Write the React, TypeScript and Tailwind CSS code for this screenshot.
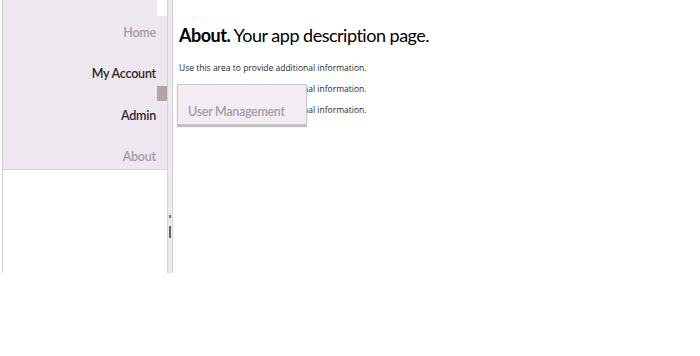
import React from 'react';

const navItems = [
    { label: 'Home', active: false },
    { label: 'My Account', active: true },
    { label: 'Admin', active: true },
    { label: 'About', active: false },
];

const App: React.FC = () => {
    return (
        <div className="w-[700px] h-[356px] bg-white overflow-hidden" style={{ fontFamily: 'Lato, "Open Sans", sans-serif' }}>
            <div className="flex h-[273px] pl-[2px]">
                {/* Side panel */}
                <div className="flex border-l border-[#d2cdd2]">
                    <div className="flex flex-col w-[164px]">
                        <div className="flex h-[170px] shrink-0 bg-[#efe7ef] border-b border-[#d9d1d9]">
                            <nav className="flex-1 flex flex-col items-end pt-[13px] pr-[1px]">
                                {navItems.map((item) => (
                                    <div
                                        key={item.label}
                                        className={`h-[41.3px] shrink-0 leading-[40px] text-[12.5px] tracking-[-0.2px] font-semibold ${item.active ? 'text-[#2b2629]' : 'text-[#a39ca1]'}`}
                                    >
                                        {item.label}
                                    </div>
                                ))}
                            </nav>
                            <div className="w-[10px] flex flex-col">
                                <div className="h-[16px] bg-white"></div>
                                <div className="h-[70px]"></div>
                                <div className="h-[15px] bg-[#b3a4a8]"></div>
                            </div>
                        </div>
                        <div className="flex-1 bg-white"></div>
                    </div>
                    {/* Splitter strip */}
                    <div className="w-[6px] bg-[#efe7ef] border-x border-[#d9d1d9] flex flex-col items-center pt-[215px]">
                        <div className="w-[2px] h-[3px] bg-[#7a7074]"></div>
                        <div className="h-[8px]"></div>
                        <div className="w-[2px] h-[12px] bg-[#6e6468]"></div>
                    </div>
                </div>

                {/* Content */}
                <main className="relative flex-1 pl-[6px] pt-[22px] text-[#1f1f1f]">
                    <h1 className="text-[18px] leading-[26px] tracking-[-0.5px] text-black">
                        <span className="font-bold">About.</span> Your app description page.
                    </h1>
                    <div
                        className="mt-[14px] flex flex-col gap-[9px] text-[8.5px] leading-[12px] text-[#2a2a2a]"
                        style={{ fontFamily: '"Open Sans", sans-serif' }}
                    >
                        <p>Use this area to provide additional information.</p>
                        <p>Use this area to provide additional information.</p>
                        <p>Use this area to provide additional information.</p>
                    </div>

                    {/* Dropdown flyout */}
                    <div className="absolute left-[4px] top-[84px] w-[130px] h-[41px] bg-[#f3edf3] border border-[#cfc7cf] shadow-[0_2px_1px_rgba(0,0,0,0.25)] flex items-end pl-[10px] pb-[2px]">
                        <span className="text-[12.5px] tracking-[-0.3px] font-semibold text-[#a39ca1]">User Management</span>
                    </div>
                </main>
            </div>
        </div>
    );
};

export default App;
